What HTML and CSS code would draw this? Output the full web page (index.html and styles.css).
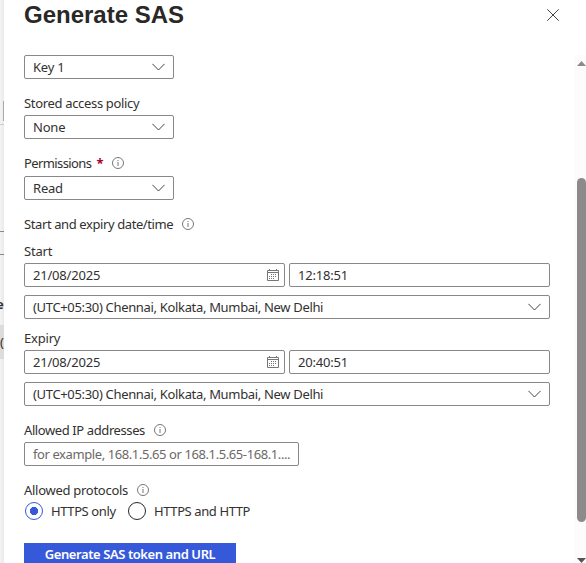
FILE: index.html
```html
<!DOCTYPE html>
<html lang="en">
<head>
<meta charset="utf-8">
<title>Generate SAS</title>
<link rel="stylesheet" href="styles.css">
</head>
<body>
<svg class="defs" aria-hidden="true">
  <symbol id="chevron" viewBox="0 0 13 8"><path d="M.4 .8 6.5 7 12.6 .8"/></symbol>
  <symbol id="info" viewBox="0 0 12 12"><circle cx="6" cy="6" r="5.5"/><path d="M6 5v4M6 3v1"/></symbol>
  <symbol id="calendar" viewBox="0 0 12 12"><path d="M.5 1.5h11v10H.5zM.5 3.5h11M2.5 0v2M9.5 0v2"/><path class="dots" d="M4 5.5h6M2 7.5h8M2 9.5h6"/></symbol>
</svg>
<div class="screen">
  <aside class="backdrop">
    <i class="edge"></i><i class="rule first"></i><i class="rule second"></i><i class="rule third"></i>
    <b class="cut-word">e</b><span class="cut-row">(</span>
  </aside>
  <main class="panel">
    <header><h1>Generate SAS</h1>
      <svg class="close" viewBox="0 0 12 12"><path d="M.3 .3l11.4 11.4M11.7 .3.3 11.7"/></svg>
    </header>
    <div class="body">
      <form>
        <div class="box short"><span class="t-key">Key 1</span><svg class="chev"><use href="#chevron"/></svg></div>
        <label class="stored"><span class="t-stored">Stored access policy</span></label>
        <div class="box short"><span class="t-none">None</span><svg class="chev"><use href="#chevron"/></svg></div>
        <label class="permissions"><span class="t-perm">Permissions</span><b class="required">*</b><svg class="info"><use href="#info"/></svg></label>
        <div class="box short"><span class="t-read">Read</span><svg class="chev"><use href="#chevron"/></svg></div>
        <label class="range"><span class="t-range">Start and expiry date/time</span><svg class="info"><use href="#info"/></svg></label>
        <label class="start"><span class="t-start">Start</span></label>
        <div class="pair">
          <div class="box"><span class="t-date">21/08/2025</span><svg class="cal"><use href="#calendar"/></svg></div>
          <div class="box"><span class="t-time">12:18:51</span></div>
        </div>
        <div class="box zone"><span class="t-zone">(UTC+05:30) Chennai, Kolkata, Mumbai, New Delhi</span><svg class="chev"><use href="#chevron"/></svg></div>
        <label class="expiry"><span class="t-expiry">Expiry</span></label>
        <div class="pair">
          <div class="box"><span class="t-date">21/08/2025</span><svg class="cal"><use href="#calendar"/></svg></div>
          <div class="box"><span class="t-time">20:40:51</span></div>
        </div>
        <div class="box zone"><span class="t-zone">(UTC+05:30) Chennai, Kolkata, Mumbai, New Delhi</span><svg class="chev"><use href="#chevron"/></svg></div>
        <label class="ip"><span class="t-ip">Allowed IP addresses</span><svg class="info"><use href="#info"/></svg></label>
        <div class="box address"><span class="t-hint">for example, 168.1.5.65 or 168.1.5.65-168.1....</span></div>
        <label class="protocols"><span class="t-proto">Allowed protocols</span><svg class="info"><use href="#info"/></svg></label>
        <div class="radios"><i class="radio on"></i><span class="t-only">HTTPS only</span><i class="radio"></i><span class="t-both">HTTPS and HTTP</span></div>
        <button type="button"><span class="t-button">Generate SAS token and URL</span></button>
      </form>
      <div class="scrollbar"><i class="arrow up"></i><i class="thumb"></i><i class="arrow down"></i></div>
    </div>
  </main>
</div>
</body>
</html>
```
FILE: styles.css
```css
* { box-sizing: border-box; }
body { margin: 0; overflow: hidden; background: #fff; color: #323130; font: 13px/20px "Noto Sans", sans-serif; letter-spacing: -.2px; }
.defs { position: absolute; width: 0; height: 0; }
svg { display: block; flex: none; fill: none; stroke: #555; }
.screen { display: flex; width: 586px; height: 563px; overflow: hidden; }
.backdrop { position: relative; width: 4px; overflow: hidden; background: linear-gradient(90deg, #f4f4f4, #e9e9e9); }
.backdrop > * { position: absolute; }
.edge { right: 0; top: 101px; width: 1px; height: 20px; background: #aaa; }
.rule { left: 0; width: 4px; height: 1px; background: #888; }
.first { top: 124px; background: #ccc; }
.second { top: 231px; }
.third { top: 254px; }
.cut-word { left: -4px; top: 294px; }
.cut-row { left: 0; top: 325px; width: 4px; height: 34px; line-height: 34px; background: #dedcda; }
.panel { width: 582px; background: #fff; }
header { display: flex; justify-content: space-between; height: 55px; padding: 0 27px 0 20px; }
h1 { margin: 0; color: #292827; font: bold 24px/30px "Liberation Sans", sans-serif; letter-spacing: 0; }
.close { width: 12px; height: 12px; margin-top: 9px; stroke: #444; }
.body { display: flex; height: 508px; }
form { width: 526px; margin-left: 20px; }
.box { display: flex; align-items: center; justify-content: space-between; height: 24px; padding: 0 8px; border: 1px solid #8a8886; border-radius: 2px; white-space: nowrap; }
.short { width: 150px; }
.chev { width: 13px; height: 8px; stroke: #444; }
label { display: flex; align-items: center; height: 20px; white-space: nowrap; }
.stored { margin: 14px 0 2px; }
.permissions { margin: 14px 0 3px; }
.range { margin-top: 14px; }
.start { margin: 7px 0 2px; }
.expiry { margin: 9px 0 2px; }
.ip { margin: 14px 0 2px; }
.protocols { margin-top: 14px; }
.required { margin-left: 5px; color: #a4042c; }
.info { width: 12px; height: 12px; margin-left: 9px; stroke: #777; }
.t-stored { letter-spacing: -.33px; }
.t-perm { letter-spacing: -.6px; }
.t-range { letter-spacing: -.4px; }
.t-zone { letter-spacing: -.33px; }
.t-ip { letter-spacing: -.4px; }
.t-hint { letter-spacing: -.41px; }
.t-proto { letter-spacing: -.28px; }
.t-button { letter-spacing: -.42px; }
.pair { display: grid; grid-template-columns: 261px 261px; gap: 4px; margin-bottom: 8px; }
.pair .box { padding-right: 5px; }
.cal { width: 12px; height: 12px; stroke: #777; }
.dots { stroke-dasharray: 1 1; }
.address { width: 275px; color: #6b6967; }
.radios { display: flex; align-items: center; height: 22px; }
.radio { width: 18px; height: 18px; border: 1px solid #292827; border-radius: 50%; }
.radio.on { margin-left: 1px; border-color: #3659d9; background: radial-gradient(circle, #3659d9 3.8px, transparent 4.4px); }
.t-only, .t-both { margin-left: 8px; letter-spacing: -.4px; }
.t-only { width: 69px; margin-right: 8px; }
button { display: flex; align-items: center; justify-content: center; width: 212px; height: 24px; margin-top: 21px; padding: 0 0 2px; border: 0; background: #3659d9; color: #fff; font: 600 13px/20px "Noto Sans", sans-serif; white-space: nowrap; }
.scrollbar { position: relative; width: 12px; margin-left: 24px; background: #fcfcfc; }
.scrollbar > * { position: absolute; left: 3px; width: 9px; }
.thumb { top: 123px; height: 344px; border-radius: 5px; background: #8b8b8b; }
.arrow { height: 5px; background: #8b8b8b; }
.up { top: 6px; clip-path: polygon(50% 0, 100% 100%, 0 100%); }
.down { bottom: 0; clip-path: polygon(0 0, 100% 0, 50% 100%); background: #555; }
```
